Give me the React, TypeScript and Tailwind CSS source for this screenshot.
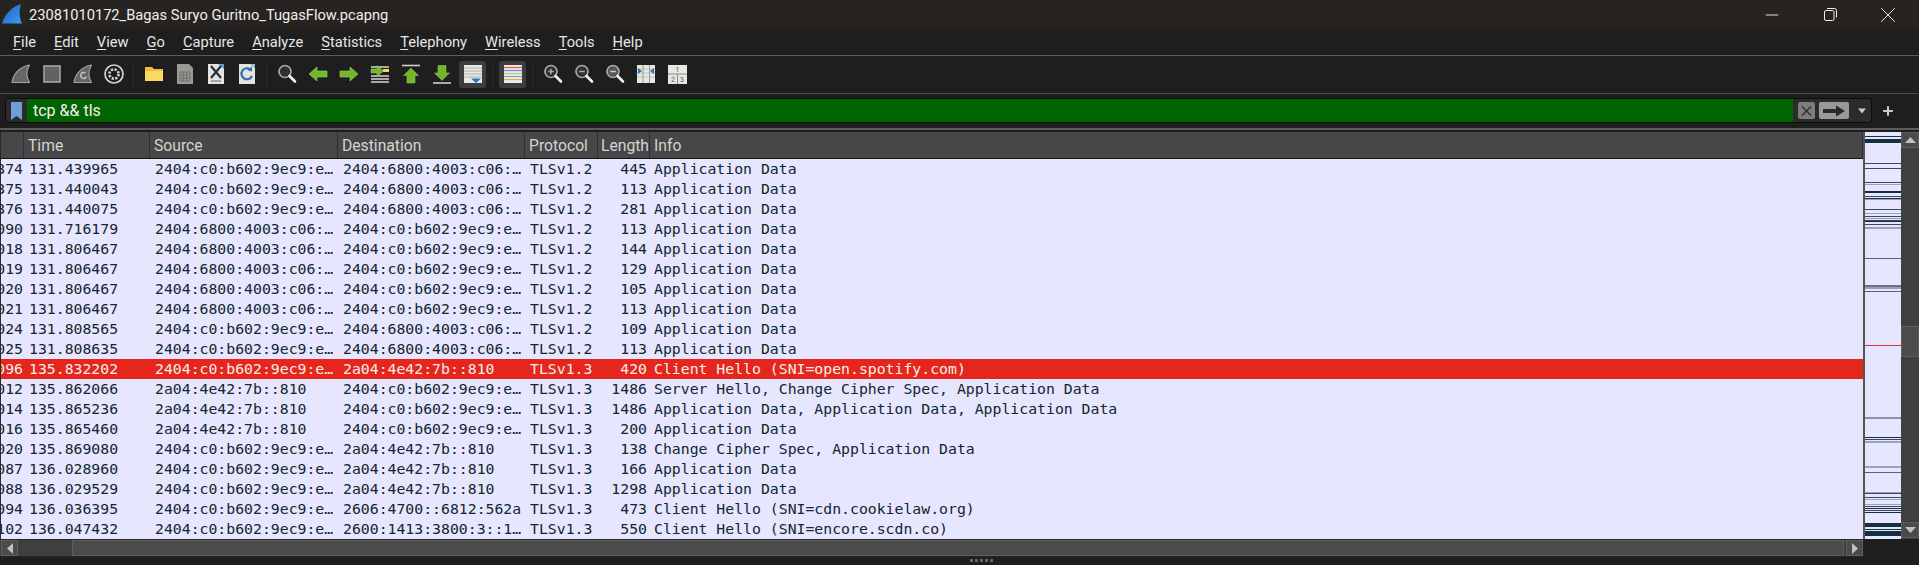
import { Minus, X, Plus } from 'lucide-react'

const mono = { fontFamily: '"DejaVu Sans Mono", monospace' }

const menus = ['File', 'Edit', 'View', 'Go', 'Capture', 'Analyze', 'Statistics', 'Telephony', 'Wireless', 'Tools', 'Help']

const A = '2404:c0:b602:9ec9:e…'
const G = '2404:6800:4003:c06:…'
const S = '2a04:4e42:7b::810'

const rows = [
  ['374', '131.439965', A, G, 'TLSv1.2', '445', 'Application Data'],
  ['375', '131.440043', A, G, 'TLSv1.2', '113', 'Application Data'],
  ['376', '131.440075', A, G, 'TLSv1.2', '281', 'Application Data'],
  ['090', '131.716179', G, A, 'TLSv1.2', '113', 'Application Data'],
  ['018', '131.806467', G, A, 'TLSv1.2', '144', 'Application Data'],
  ['019', '131.806467', G, A, 'TLSv1.2', '129', 'Application Data'],
  ['020', '131.806467', G, A, 'TLSv1.2', '105', 'Application Data'],
  ['021', '131.806467', G, A, 'TLSv1.2', '113', 'Application Data'],
  ['024', '131.808565', A, G, 'TLSv1.2', '109', 'Application Data'],
  ['025', '131.808635', A, G, 'TLSv1.2', '113', 'Application Data'],
  ['096', '135.832202', A, S, 'TLSv1.3', '420', 'Client Hello (SNI=open.spotify.com)'],
  ['012', '135.862066', S, A, 'TLSv1.3', '1486', 'Server Hello, Change Cipher Spec, Application Data'],
  ['014', '135.865236', S, A, 'TLSv1.3', '1486', 'Application Data, Application Data, Application Data'],
  ['016', '135.865460', S, A, 'TLSv1.3', '200', 'Application Data'],
  ['020', '135.869080', A, S, 'TLSv1.3', '138', 'Change Cipher Spec, Application Data'],
  ['087', '136.028960', A, S, 'TLSv1.3', '166', 'Application Data'],
  ['088', '136.029529', A, S, 'TLSv1.3', '1298', 'Application Data'],
  ['094', '136.036395', A, '2606:4700::6812:562a', 'TLSv1.3', '473', 'Client Hello (SNI=cdn.cookielaw.org)'],
  ['102', '136.047432', A, '2600:1413:3800:3::1…', 'TLSv1.3', '550', 'Client Hello (SNI=encore.scdn.co)'],
]

const dark = '#14303c'
const mid = '#3a4a58'
const soft = '#9aa2b8'

// y (page pixels), height, colour of the marks in the packet overview
const marks: [number, number, string][] = [
  [136, 1, dark], [139, 4, dark], [163, 1, mid], [168, 1, mid], [182, 1, mid], [184, 1, soft], [191, 2, dark], [196, 1, mid],
  [198, 1, dark], [199, 1, soft], [209, 1, mid], [213, 1, soft], [216, 1, mid], [218, 1, soft], [220, 1, mid], [221, 1, dark],
  [224, 1, mid], [227, 2, soft], [258, 1, '#5a6472'], [285, 2, '#6a7484'], [287, 2, soft], [291, 1, '#5a6472'], [345, 1, '#d93636'],
  [417, 2, '#8a92a8'], [437, 1, dark], [439, 1, mid], [441, 2, soft], [466, 2, soft], [472, 1, '#5a6472'], [492, 1, soft],
  [493, 1, mid], [497, 1, mid], [499, 1, soft], [504, 1, soft], [506, 1, mid], [508, 1, dark], [510, 1, mid], [512, 1, dark],
  [523, 4, dark], [529, 1, dark], [531, 5, dark],
]

function ToolIcon({ children, boxed }: { children: React.ReactNode; boxed?: boolean }) {
  return (
    <div className={`flex h-[27px] w-[27px] shrink-0 items-center justify-center rounded-[3px] ${boxed ? 'bg-[#3d3d3d]' : ''}`}>
      <svg width="22" height="22" viewBox="0 0 22 22">{children}</svg>
    </div>
  )
}

function Fin() {
  return <path d="M2 19.5 C3 11 10 3.5 19.5 2 C16 8 16 14 19.5 19.5 Z" fill="#666666" stroke="#a4a4a4" strokeWidth="1.2" strokeLinejoin="round" />
}

function Sheet({ fill = '#e4e4dc', children }: { fill?: string; children?: React.ReactNode }) {
  return (
    <>
      <path d="M3 1 H15 L19 5 V21 H3 Z" fill={fill} />
      {children}
    </>
  )
}

function Lens({ sign }: { sign?: 'plus' | 'minus' | 'fit' }) {
  return (
    <>
      <circle cx="9" cy="8.5" r="6" fill={sign === 'fit' ? '#555555' : '#303030'} stroke="#a8a8a8" strokeWidth="1.7" />
      {sign && <path d="M6.2 8.5 H11.8" stroke={sign === 'fit' ? '#d0d0d0' : '#a8a8a8'} strokeWidth="1.5" />}
      {sign === 'plus' && <path d="M9 5.7 V11.3" stroke="#a8a8a8" strokeWidth="1.5" />}
      <path d="M13.5 13 L19 18.5" stroke="#f2f2f2" strokeWidth="2.6" strokeLinecap="round" />
    </>
  )
}

function Sep() {
  return <div className="mx-[2px] h-[27px] w-px shrink-0 bg-[#2a2a2a]" />
}

function Toolbar() {
  return (
    <div className="flex h-[38px] shrink-0 items-center gap-[4px] border-b border-[#4c4c4c] pb-[1px] pl-[7px]">
      <ToolIcon><Fin /></ToolIcon>
      <ToolIcon><rect x="3" y="3" width="16" height="16" fill="#626262" stroke="#a4a4a4" strokeWidth="1.6" /></ToolIcon>
      <ToolIcon>
        <Fin />
        <path d="M13.5 10 a3 3 0 1 0 1 3.5" fill="none" stroke="#c4c4c4" strokeWidth="1.5" />
      </ToolIcon>
      <ToolIcon>
        <circle cx="11" cy="11" r="9" fill="none" stroke="#d6d6d6" strokeWidth="1.7" />
        <circle cx="11" cy="11" r="4.6" fill="none" stroke="#d6d6d6" strokeWidth="2.6" strokeDasharray="2.2 1.4" />
      </ToolIcon>
      <Sep />
      <ToolIcon>
        <path d="M2 4 H9 L11 6 H20 V18 H2 Z" fill="#f2bb3a" />
        <path d="M2 8 H20 V18 H2 Z" fill="#fbd764" />
      </ToolIcon>
      <ToolIcon>
        <Sheet fill="#9a9a96">
          <path d="M6 9 H16 V18 H6 Z M9.3 9 V18 M12.6 9 V18 M6 12 H16 M6 15 H16" fill="none" stroke="#6e6e6e" strokeWidth="1" />
        </Sheet>
      </ToolIcon>
      <ToolIcon>
        <Sheet>
          <path d="M13 1 L19 1 L19 6 Z" fill="#5aa0d8" />
          <path d="M6 3 L16 15 M16 3 L6 15" stroke="#24303c" strokeWidth="2.2" />
          <path d="M6 18 H16" stroke="#8a8a8a" strokeWidth="1.4" />
        </Sheet>
      </ToolIcon>
      <ToolIcon>
        <Sheet>
          <path d="M14.5 6.5 A5.5 5.5 0 1 0 16 13" fill="none" stroke="#2f6db5" strokeWidth="2.2" />
          <path d="M11 7 L16 8.5 L16 3.5 Z" fill="#2f6db5" />
          <path d="M14 1 L19 1 L19 5 Z" fill="#8cc0e8" />
        </Sheet>
      </ToolIcon>
      <Sep />
      <ToolIcon><Lens /></ToolIcon>
      <ToolIcon><path d="M2 11 L10 4 V8 H20 V14 H10 V18 Z" fill="#72b62a" stroke="#9bd05c" strokeWidth="0.6" /></ToolIcon>
      <ToolIcon><path d="M20 11 L12 4 V8 H2 V14 H12 V18 Z" fill="#72b62a" stroke="#9bd05c" strokeWidth="0.6" /></ToolIcon>
      <ToolIcon>
        <path d="M2 4 H20 M2 13 H20 M2 16 H20 M2 19 H20" stroke="#d8d8d8" strokeWidth="1.4" />
        <rect x="14" y="6" width="6" height="3" fill="#f0d860" />
        <path d="M2 6 H8 V2.5 L14.5 8 L8 13.5 V10 H2 Z" fill="#72b62a" stroke="#9bd05c" strokeWidth="0.5" />
      </ToolIcon>
      <ToolIcon>
        <path d="M2 2.5 H20" stroke="#d0d0d0" strokeWidth="1.6" />
        <path d="M11 5 L18.5 12.5 H15 V20 H7 V12.5 H3.5 Z" fill="#72b62a" stroke="#9bd05c" strokeWidth="0.5" />
      </ToolIcon>
      <ToolIcon>
        <path d="M2 20 H20" stroke="#d0d0d0" strokeWidth="1.6" />
        <path d="M11 17.5 L18.5 10 H15 V2.5 H7 V10 H3.5 Z" fill="#72b62a" stroke="#9bd05c" strokeWidth="0.5" />
      </ToolIcon>
      <ToolIcon boxed>
        <path d="M2 2 H20 V20 H2 Z" fill="#e8e8e2" />
        <path d="M2 5 H20 M2 8 H20 M2 11 H20 M2 14 H20" stroke="#b4b4b0" strokeWidth="1" />
        <path d="M9 15.5 H19 L14 20 Z" fill="#2f6db5" />
      </ToolIcon>
      <Sep />
      <ToolIcon boxed>
        <rect x="2" y="2" width="18" height="18" fill="#ecece6" />
        <path d="M2 4.5 H20" stroke="#d85a5a" strokeWidth="1.2" />
        <path d="M2 7.5 H20" stroke="#8f7fd0" strokeWidth="1.2" />
        <path d="M2 10.5 H20" stroke="#a8d070" strokeWidth="1.2" />
        <path d="M2 13.5 H20" stroke="#6fa8dc" strokeWidth="1.2" />
        <path d="M2 16.5 H20" stroke="#e0b040" strokeWidth="1.2" />
      </ToolIcon>
      <Sep />
      <ToolIcon><Lens sign="plus" /></ToolIcon>
      <ToolIcon><Lens sign="minus" /></ToolIcon>
      <ToolIcon><Lens sign="fit" /></ToolIcon>
      <ToolIcon>
        <rect x="2" y="2" width="18" height="18" fill="#e8e8e2" />
        <path d="M2 6 H20 M2 10 H20 M2 14 H20" stroke="#c4c4bc" strokeWidth="1" />
        <path d="M8 2 V20 M14.5 2 V20" stroke="#9a9a9a" strokeWidth="1" />
        <path d="M3 5 L7 8 L3 11 Z M19 5 L15 8 L19 11 Z" fill="#2f6db5" />
      </ToolIcon>
      <ToolIcon>
        <rect x="2" y="2" width="19" height="19" fill="#e8e8e2" />
        <path d="M2 11 H21 M11.5 11 V21" stroke="#8a8a8a" strokeWidth="1" />
        <text x="11.5" y="9" textAnchor="middle" fontSize="7" fill="#555555">1</text>
        <text x="7" y="18.5" textAnchor="middle" fontSize="7" fill="#555555">2</text>
        <text x="16" y="18.5" textAnchor="middle" fontSize="7" fill="#555555">3</text>
      </ToolIcon>
    </div>
  )
}

function HeaderCell({ label, className }: { label: string; className: string }) {
  return (
    <div className={`flex h-full items-center overflow-hidden whitespace-nowrap border-r border-[#303030] pt-[1px] text-[15.7px] text-[#d4d4d4] ${className}`}>
      {label}
    </div>
  )
}

function ScrollButton({ children, className = '' }: { children: React.ReactNode; className?: string }) {
  return (
    <div className={`flex shrink-0 items-center justify-center border border-[#5e5e5e] bg-[#4b4b4b] ${className}`}>
      {children}
    </div>
  )
}

export default function App() {
  return (
    <div className="flex h-[565px] w-[1919px] flex-col overflow-hidden bg-[#1e1e1e] text-[#e6e6e6]" style={{ fontFamily: 'Roboto, sans-serif' }}>
      {/* title bar */}
      <div className="flex h-[29px] shrink-0 items-center bg-[#262320]">
        <svg width="24" height="29" viewBox="0 0 24 29" className="ml-[1px]">
          <defs>
            <linearGradient id="fin" x1="0" y1="0" x2="1" y2="1">
              <stop offset="0" stopColor="#1c5fc0" />
              <stop offset="1" stopColor="#3f9cf0" />
            </linearGradient>
          </defs>
          <path d="M1 23.5 C4 14 11 6.5 20 4 C18 10 18 17 21 23.5 Z" fill="url(#fin)" />
        </svg>
        <span className="ml-[4px] text-[14.67px] text-[#efefef]">23081010172_Bagas Suryo Guritno_TugasFlow.pcapng</span>
        <div className="ml-auto flex items-center pr-[2px] text-[#eeeeee]">
          <div className="flex w-[58px] justify-center"><Minus size={20} strokeWidth={1.1} /></div>
          <div className="flex w-[58px] justify-center">
            <svg width="13" height="13" viewBox="0 0 13 13" fill="none" stroke="currentColor" strokeWidth="1">
              <rect x="0.5" y="2.5" width="9.5" height="10" rx="1.5" />
              <path d="M3 0.5 H10.5 A2 2 0 0 1 12.5 2.5 V9.5" />
            </svg>
          </div>
          <div className="flex w-[58px] justify-center"><X size={26} strokeWidth={0.9} /></div>
        </div>
      </div>

      {/* menu bar */}
      <div className="flex h-[27px] shrink-0 items-center gap-[18px] border-b border-[#5c5c5c] pl-[13px] text-[14.67px]">
        {menus.map((m) => (
          <span key={m}>
            <span className="underline underline-offset-2">{m[0]}</span>
            {m.slice(1)}
          </span>
        ))}
      </div>

      <Toolbar />

      {/* display filter */}
      <div className="flex h-[36px] shrink-0 items-center border-b-2 border-[#5c5c5c] pb-[1px] pl-[5px]">
        <div className="flex h-[25px] w-[1867px] items-stretch rounded-[3px] border border-[#0c0c0c] bg-[#2b2b2b]">
          <div className="flex w-[21px] items-center justify-center">
            <svg width="11" height="18" viewBox="0 0 11 18"><path d="M0 0 H11 V18 L5.5 14 L0 18 Z" fill="#6f9fd8" /></svg>
          </div>
          <div className="flex flex-1 items-center bg-[#006400] pl-[6px] pt-[1px] text-[16px] text-[#f0f0f0]">tcp &amp;&amp; tls</div>
          <div className="flex w-[78px] items-center gap-[4px] pl-[5px]">
            <div className="flex h-[17px] w-[17px] items-center justify-center rounded-[2px] bg-[#7d7d7d]">
              <X size={20} strokeWidth={2} className="text-[#333333]" />
            </div>
            <div className="flex h-[17px] w-[30px] items-center justify-center rounded-[2px] bg-[#9a9a9a]">
              <svg width="24" height="12" viewBox="0 0 24 12"><path d="M1 4 H14 V0.5 L23 6 L14 11.5 V8 H1 Z" fill="#2a2a2a" /></svg>
            </div>
            <svg width="10" height="6" viewBox="0 0 10 6" className="ml-[4px]"><path d="M1 0.5 H9 L5 5.5 Z" fill="#c8c8c8" /></svg>
          </div>
        </div>
        <Plus size={14} strokeWidth={3.5} className="ml-[9px] text-[#cccccc]" />
      </div>

      {/* packet list */}
      <div className="mt-[2px] flex h-[407px] shrink-0">
        <div className="flex w-[1863px] flex-col border-l border-[#2a2a2a]">
          <div className="flex h-[27px] shrink-0 border-b border-[#111111] bg-[#474747]">
            <HeaderCell label="" className="w-[23px]" />
            <HeaderCell label="Time" className="w-[126px] pl-[4px]" />
            <HeaderCell label="Source" className="w-[188px] pl-[4px]" />
            <HeaderCell label="Destination" className="w-[187px] pl-[4px]" />
            <HeaderCell label="Protocol" className="w-[73px] pl-[4px]" />
            <HeaderCell label="Length" className="w-[52px] pl-[3px]" />
            <HeaderCell label="Info" className="flex-1 pl-[4px]" />
          </div>
          <div className="flex-1 bg-[#e7e6ff] text-[14.8px] text-[#12272e]" style={mono}>
            {rows.map((r, i) => (
              <div key={i} className={`flex h-[20px] items-center whitespace-pre ${r[0] === '096' ? 'bg-[#e6261d] text-[#f5efe8]' : ''}`}>
                <div className="flex w-[23px] justify-end overflow-hidden pr-[1px]"><span className="shrink-0">{r[0]}</span></div>
                <div className="w-[126px] pl-[5px]">{r[1]}</div>
                <div className="w-[188px] pl-[5px]">{r[2]}</div>
                <div className="w-[187px] pl-[5px]">{r[3]}</div>
                <div className="w-[73px] pl-[5px]">{r[4]}</div>
                <div className="w-[52px] pr-[3px] text-right">{r[5]}</div>
                <div className="flex-1 pl-[4px]">{r[6]}</div>
              </div>
            ))}
          </div>
        </div>

        {/* packet overview */}
        <div className="w-[38px] border-l-2 border-[#555555] bg-[#e7e6ff]">
          <svg width="36" height="407" viewBox="0 132 36 407" className="block">
            {marks.map(([y, h, c]) => (
              <rect key={y} x="0" y={y} width="36" height={h} fill={c} />
            ))}
          </svg>
        </div>

        {/* vertical scrollbar */}
        <div className="flex w-[18px] flex-col bg-[#3f3f3f] pb-[1px]">
          <ScrollButton className="h-[16px]">
            <svg width="11" height="6" viewBox="0 0 11 6"><path d="M5.5 0 L11 6 H0 Z" fill="#c0c0c0" /></svg>
          </ScrollButton>
          <div className="h-[178px] shrink-0" />
          <ScrollButton className="h-[31px]"><span /></ScrollButton>
          <div className="flex-1" />
          <ScrollButton className="h-[16px]">
            <svg width="11" height="6" viewBox="0 0 11 6"><path d="M5.5 6 L11 0 H0 Z" fill="#c0c0c0" /></svg>
          </ScrollButton>
        </div>
      </div>

      {/* horizontal scrollbar */}
      <div className="flex h-[18px] w-[1863px] shrink-0 gap-[2px] border-y border-[#262626] bg-[#3f3f3f]">
        <ScrollButton className="ml-[1px] w-[17px]">
          <svg width="6" height="11" viewBox="0 0 6 11"><path d="M0 5.5 L6 0 V11 Z" fill="#c0c0c0" /></svg>
        </ScrollButton>
        <div className="w-[50px] shrink-0" />
        <ScrollButton className="flex-1"><span /></ScrollButton>
        <ScrollButton className="w-[17px]">
          <svg width="6" height="11" viewBox="0 0 6 11"><path d="M6 5.5 L0 0 V11 Z" fill="#c0c0c0" /></svg>
        </ScrollButton>
      </div>

      {/* pane splitter grip */}
      <div className="flex flex-1 justify-center gap-[2px] pl-[43px] pt-[2px]">
        {[0, 1, 2, 3, 4].map((i) => (
          <div key={i} className="h-[3px] w-[3px] bg-[#666666]" />
        ))}
      </div>
    </div>
  )
}
